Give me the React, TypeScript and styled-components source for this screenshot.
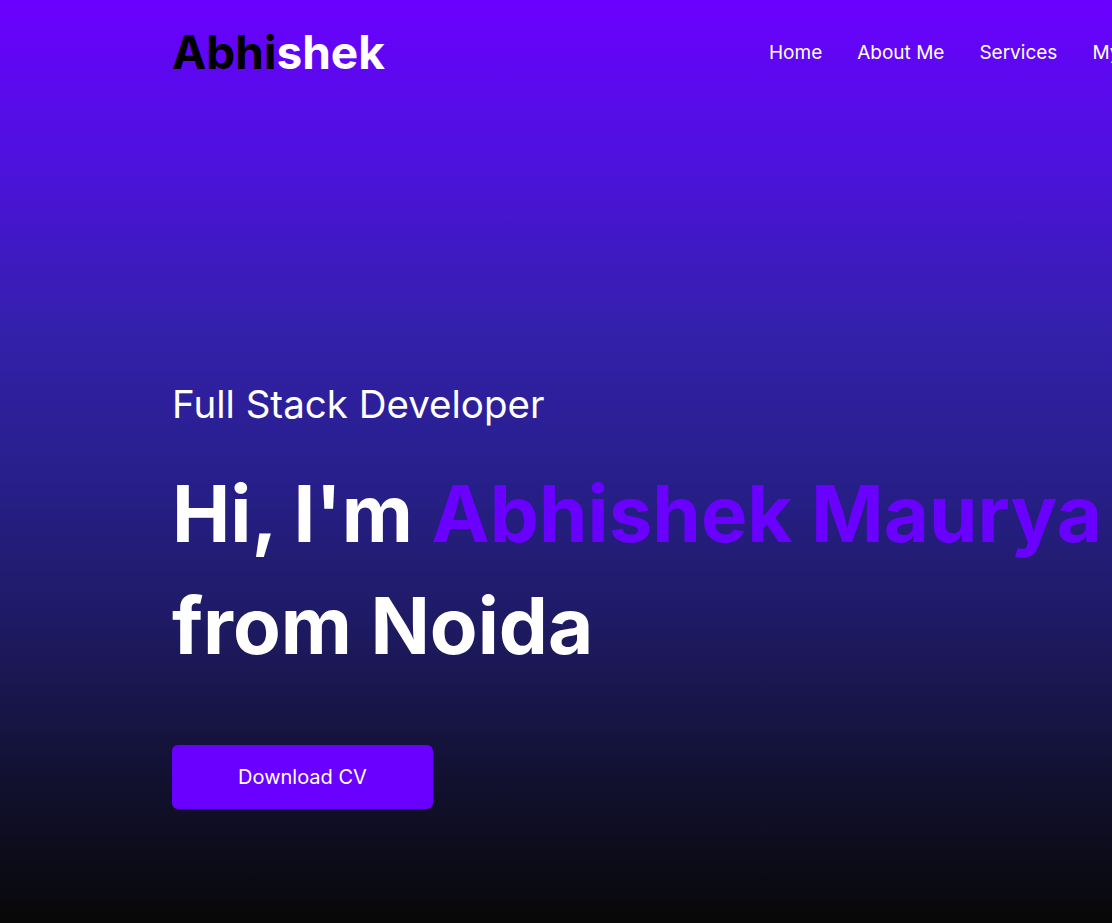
import styled, { createGlobalStyle } from 'styled-components';

const GlobalStyle = createGlobalStyle`
  * {
    margin: 0;
    padding: 0;
    box-sizing: border-box;
  }
  html, body {
    overflow: hidden;
  }
  body {
    font-family: Inter, "Open Sans", sans-serif;
    background: #080808;
    color: #fff;
  }
`;

const navLinks = ['Home', 'About Me', 'Services', 'My Portfolio', 'Contact'];

export default function App() {
  return (
    <>
      <GlobalStyle />
      <Hero>
        <Container>
          {/* 헤더 */}
          <Header>
            <Logo>
              <span>Abhi</span>shek
            </Logo>
            <NavList>
              {navLinks.map((link) => (
                <NavItem key={link}>
                  <NavLink href="#">{link}</NavLink>
                </NavItem>
              ))}
            </NavList>
          </Header>

          {/* 인트로 */}
          <HeroText>
            <Role>Full Stack Developer</Role>
            <Title>
              Hi, I'm <Highlight>Abhishek Maurya</Highlight>
              <br />
              from Noida
            </Title>
            <DownloadButton href="#">Download CV</DownloadButton>
          </HeroText>
        </Container>
      </Hero>
    </>
  );
}

const Hero = styled('div')`
  width: 100%;
  height: 923px;
  background: linear-gradient(
    180deg,
    #6a00ff 0%,
    #4d12dc 18%,
    #3320aa 36%,
    #271f8a 52%,
    #1e1a62 68%,
    #121131 84%,
    #080808 100%
  );
`;

const Container = styled('div')`
  padding-left: 172px;
  white-space: nowrap;
`;

const Header = styled('header')`
  display: grid;
  grid-template-columns: 597px 1fr;
  align-items: center;
  height: 104px;
`;

const Logo = styled('h1')`
  font-size: 46px;
  font-weight: 700;
  letter-spacing: 0;
  color: #fff;

  span {
    color: #000;
  }
`;

const NavList = styled('ul')`
  display: flex;
  list-style: none;
  gap: 35px;
`;

const NavItem = styled('li')`
  font-size: 19px;
`;

const NavLink = styled('a')`
  color: #fff;
  text-decoration: none;
  font-weight: 400;
`;

const HeroText = styled('div')`
  padding-top: 281px;
`;

const Role = styled('p')`
  font-size: 38.5px;
  font-weight: 400;
  line-height: 1;
`;

const Title = styled('h1')`
  margin-top: 34px;
  font-size: 78px;
  font-weight: 700;
  line-height: 112px;
`;

const Highlight = styled('span')`
  color: #6a00ff;
`;

const DownloadButton = styled('a')`
  display: inline-flex;
  align-items: center;
  justify-content: center;
  margin-top: 63px;
  width: 261px;
  height: 64px;
  border-radius: 6px;
  background: #6a00ff;
  color: #fff;
  font-size: 20px;
  text-decoration: none;
`;
